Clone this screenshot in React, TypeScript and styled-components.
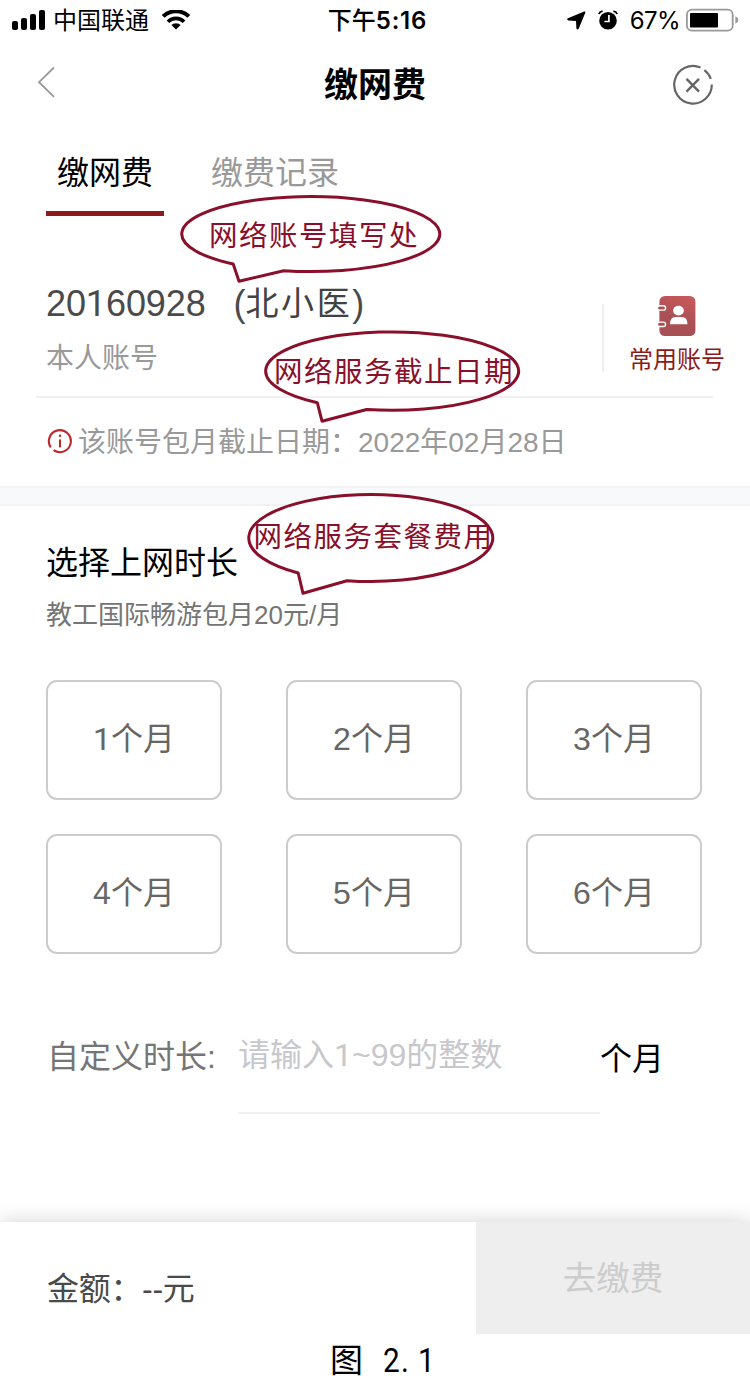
import React from 'react';
import styled, { createGlobalStyle } from 'styled-components';

const GlobalStyle = createGlobalStyle`
  * { box-sizing: border-box; }
  body {
    margin: 0;
    background: #fff;
    font-family: "Liberation Sans", "Noto Sans CJK SC", sans-serif;
    font-weight: 400;
  }
  svg { flex: none; }
`;

const Screen = styled.div`
  position: relative;
  width: 750px;
  height: 1386px;
  overflow: hidden;
  background: #fff;
  display: flex;
  flex-direction: column;
`;

/* A "1" without a foot serif */
const PlainOne = styled.span`
  font-family: Roboto, sans-serif;
`;

const StatusBar = styled.header`
  height: 40px;
  flex: none;
  display: grid;
  grid-template-columns: 1fr auto 1fr;
  grid-template-rows: 40px;
  align-items: center;
  padding: 0 11px 0 12px;
  color: #000;
  font-family: Inter, "Noto Sans CJK SC", sans-serif;
  font-size: 24px;
  line-height: 38px;
`;

const StatusGroup = styled.div<{ $end?: boolean }>`
  display: flex;
  align-items: center;
  height: 40px;
  justify-content: ${(p) => (p.$end ? 'flex-end' : 'flex-start')};
`;

const Carrier = styled.span`
  margin: 0 13px 0 8px;
  padding-top: 2px;
`;

const Clock = styled.span`
  display: flex;
  font-weight: 500;
  padding: 2px 0 0 4px;
`;

const ClockDigits = styled.span`
  font-weight: 600;
  letter-spacing: 0.8px;
`;

const Percent = styled.span`
  margin: 0 6px 0 12px;
  padding-top: 2px;
  letter-spacing: -0.6px;
`;

const NavBar = styled.nav`
  height: 90px;
  flex: none;
  display: grid;
  grid-template-columns: 1fr auto 1fr;
  align-items: center;
  padding: 0 36px 0 36px;
`;

const Title = styled.h1`
  margin: 0;
  font-size: 34px;
  font-weight: 700;
  line-height: 90px;
  color: #000;
`;

const IconButton = styled.button<{ $end?: boolean }>`
  border: 0;
  padding: 0;
  background: none;
  display: flex;
  justify-self: ${(p) => (p.$end ? 'end' : 'start')};
  margin-top: ${(p) => (p.$end ? '0' : '-7px')};
`;

const Tabs = styled.div`
  height: 86px;
  flex: none;
  display: flex;
  gap: 36px;
  padding-left: 46px;
`;

const Tab = styled.div<{ $active?: boolean }>`
  height: 86px;
  padding: 0 11px;
  font-size: 32px;
  line-height: 86px;
  white-space: nowrap;
  color: ${(p) => (p.$active ? '#000' : '#999')};
  border-bottom: 5px solid ${(p) => (p.$active ? '#8b1a1a' : 'transparent')};
`;

const Account = styled.section`
  height: 182px;
  flex: none;
  margin: 0 37px 0 36px;
  padding: 63px 0 0 10px;
  display: flex;
  border-bottom: 2px solid #f0f0f0;
`;

const AccountInfo = styled.div`
  width: 556px;
  flex: none;
`;

const AccountId = styled.div`
  display: flex;
  height: 50px;
  line-height: 50px;
  font-size: 36px;
  letter-spacing: -0.1px;
  color: #4a4a4a;
`;

const OwnerName = styled.span`
  margin-left: 28px;
  display: flex;
`;

const OwnerChars = styled.span`
  font-size: 33px;
  letter-spacing: 2.6px;
  color: #404244;
`;

const AccountKind = styled.div`
  margin-top: 8px;
  font-size: 28px;
  line-height: 43px;
  color: #999;
`;

const Frequent = styled.div`
  height: 68px;
  margin-top: 25px;
  padding-left: 25px;
  border-left: 2px solid #efefef;
  display: flex;
  flex: none;
`;

const FrequentLink = styled.div`
  width: 96px;
  height: 84px;
  margin-top: -9px;
  display: flex;
  flex-direction: column;
  align-items: center;
  font-size: 24px;
  line-height: 30px;
  gap: 9px;
  white-space: nowrap;
  color: #8b1a1a;
`;

const Notice = styled.div`
  height: 88px;
  flex: none;
  padding-left: 47px;
  display: flex;
  align-items: center;
  gap: 5px;
  font-size: 28px;
  line-height: 88px;
  color: #999;
`;

const NoticeText = styled.span`
  padding-top: 1px;
`;

const Band = styled.div`
  height: 20px;
  flex: none;
  background: #f7f9fb;
  border: solid #eff1f3;
  border-width: 2px 0;
`;

const Plan = styled.section`
  height: 174px;
  flex: none;
  padding: 32px 46px 0;
`;

const PlanTitle = styled.h2`
  margin: 0;
  font-size: 32px;
  font-weight: 400;
  line-height: 50px;
  color: #000;
`;

const PlanDetail = styled.p`
  margin: 7px 0 0;
  font-size: 26px;
  line-height: 40px;
  color: #757575;
`;

const MonthGrid = styled.div`
  flex: none;
  display: grid;
  grid-template-columns: repeat(3, 176px);
  grid-auto-rows: 120px;
  gap: 34px 64px;
  padding-left: 46px;
`;

const Month = styled.button`
  padding: 0 0 2px 0;
  border: 2px solid #ccc;
  border-radius: 11px;
  background: #fff;
  font: inherit;
  font-size: 32px;
  line-height: 114px;
  color: #666;
`;

const Custom = styled.div`
  height: 268px;
  flex: none;
  padding: 54px 0 0 47px;
  display: flex;
  font-size: 32px;
  line-height: 98px;
`;

const CustomLabel = styled.label`
  width: 191px;
  color: #757575;
`;

const MonthsField = styled.div`
  width: 362px;
  height: 106px;
  line-height: 94px;
  color: #c7c7cc;
  border-bottom: 2px solid #f0f0f0;
`;

const Unit = styled.span`
  line-height: 102px;
  color: #000;
`;

const PayBar = styled.footer`
  height: 112px;
  flex: none;
  display: flex;
  background: #fff;
  box-shadow: 0 0 20px rgba(0, 0, 0, 0.18);
  clip-path: inset(-30px 0 0 0);
`;

const Amount = styled.div`
  width: 476px;
  padding: 12px 0 0 47px;
  font-size: 32px;
  line-height: 110px;
  letter-spacing: -0.3px;
  color: #4a4a4a;
`;

const PayButton = styled.button`
  flex: 1;
  border: 0;
  padding: 2px 0 0;
  background: #eee;
  font: inherit;
  font-size: 33.5px;
  line-height: 110px;
  color: #ccc;
`;

const Caption = styled.div`
  display: flex;
  padding-left: 330px;
  font-size: 33px;
  line-height: 54px;
  color: #000;
`;

const CaptionNumber = styled.span`
  display: flex;
  margin-left: 20px;
  font-family: Roboto, sans-serif;
  font-size: 33px;
`;

const CaptionGlyph = styled.span`
  width: 17.5px;
  line-height: 54px;
  transform: scaleX(0.9);
  transform-origin: left;
`;

const CalloutBox = styled.div<{ $x: number; $y: number }>`
  position: absolute;
  left: ${(p) => p.$x}px;
  top: ${(p) => p.$y}px;
`;

const CalloutText = styled.span<{ $x: number; $y: number }>`
  position: absolute;
  left: ${(p) => p.$x}px;
  top: ${(p) => p.$y}px;
  font-size: 28.5px;
  letter-spacing: 1.5px;
  line-height: 40px;
  white-space: nowrap;
  color: #8a0f2a;
`;

type CalloutProps = {
  x: number;
  y: number;
  w: number;
  h: number;
  d: string;
  tx: number;
  ty: number;
  text: string;
  filled?: boolean;
};

const Callout = ({ x, y, w, h, d, tx, ty, text, filled }: CalloutProps) => (
  <CalloutBox $x={x} $y={y}>
    <svg width={w} height={h} viewBox={`${x} ${y} ${w} ${h}`} display="block">
      <path d={d} fill={filled ? '#fff' : 'none'} stroke="#8a0f2a" strokeWidth="3" strokeLinejoin="round" />
    </svg>
    <CalloutText $x={tx - x} $y={ty - y}>{text}</CalloutText>
  </CalloutBox>
);

const callouts: CalloutProps[] = [
  {
    x: 176, y: 190, w: 270, h: 96, tx: 209, ty: 216, text: '网络账号填写处',
    d: 'M233.2 264 L239 281.3 L283.7 270.7 A129 37.5 0 1 0 233.2 264 Z',
  },
  {
    x: 260, y: 326, w: 266, h: 100, tx: 274, ty: 352, text: '网络服务截止日期',
    d: 'M317.3 402.7 L322 421.2 L366.7 409.5 A126.5 39.2 0 1 0 317.3 402.7 Z',
  },
  {
    x: 244, y: 490, w: 256, h: 108, tx: 253.5, ty: 516.5, text: '网络服务套餐费用', filled: true,
    d: 'M298.2 573 L303 593.3 L347 580.7 A122 43.5 0 1 0 298.2 573 Z',
  },
];

const SignalIcon = () => (
  <svg width="33" height="22" viewBox="0 0 33 22">
    <rect x="0" y="12" width="6" height="9" rx="2" />
    <rect x="9" y="9" width="6" height="12" rx="2" />
    <rect x="18" y="5" width="6" height="16" rx="2" />
    <rect x="27" y="1" width="6" height="20" rx="2" />
  </svg>
);

const WifiIcon = () => (
  <svg width="28" height="20" viewBox="0 0 28 20">
    <path d="M1.2 6.4 A18.5 18.5 0 0 1 26.8 6.4" fill="none" stroke="#000" strokeWidth="4" />
    <path d="M5.9 11.7 A11.5 11.5 0 0 1 22.1 11.7" fill="none" stroke="#000" strokeWidth="3.7" />
    <path d="M14 19.6 L9.4 15.1 A6.4 6.4 0 0 1 18.6 15.1 Z" />
  </svg>
);

const LocationIcon = () => (
  <svg width="19" height="19" viewBox="0 0 19 19">
    <path d="M17.2 0.5 Q18.8 0.1 18.3 1.8 L11.8 17.4 Q10.2 19.6 9.4 17.2 L9 9.9 L1.2 9.5 Q-0.8 8.4 1 7.3 Z" />
  </svg>
);

const AlarmIcon = () => (
  <svg width="20" height="20" viewBox="0 0 20 20">
    <circle cx="10" cy="10.8" r="8.8" />
    <path d="M0.9 4 Q1.6 1.8 4.6 1.1 M19.1 4 Q18.4 1.8 15.4 1.1" fill="none" stroke="#000" strokeWidth="1.8" />
    <path d="M10.9 5 V11.5 H6.4" fill="none" stroke="#fff" strokeWidth="1.7" />
  </svg>
);

const StatusIcons = styled.div`
  display: flex;
  gap: 12px;
  align-items: center;
`;

const BatteryIcon = () => (
  <svg width="53" height="24" viewBox="0 0 53 24">
    <rect x="0.9" y="1.7" width="45.8" height="21" rx="5" fill="#fff" stroke="#999" strokeWidth="1.8" />
    <rect x="4" y="5" width="28" height="14.5" rx="1" />
    <path d="M49.4 8.3 Q52.4 9.5 52.4 12 Q52.4 14.5 49.4 15.8 Z" fill="#999" />
  </svg>
);

const BackIcon = () => (
  <svg width="22" height="34" viewBox="0 0 22 34">
    <path d="M18 2.5 L3 17.2 L18 31.8" fill="none" stroke="#999" strokeWidth="1.8" />
  </svg>
);

const CloseIcon = () => (
  <svg width="42" height="42" viewBox="0 0 42 42">
    <g fill="none" stroke="#666" strokeWidth="2.2">
      <path d="M28.5 3.5 A18.8 18.8 0 1 0 39.8 20.5" />
      <path d="M32.4 6.1 A18.8 18.8 0 0 1 38.8 14.8" />
      <path d="M14.5 14.8 L27 27.6 M27 14.8 L14.5 27.6" strokeWidth="2.4" />
    </g>
  </svg>
);

const ContactsIcon = () => (
  <svg width="38" height="41" viewBox="0 0 38 41">
    <defs>
      <linearGradient id="book" x1="0.8" y1="0" x2="0.45" y2="1">
        <stop offset="0" stopColor="#c9585c" />
        <stop offset="0.65" stopColor="#a85054" />
        <stop offset="1" stopColor="#a85054" />
      </linearGradient>
    </defs>
    <rect x="1.4" y="1" width="36" height="40" rx="5.5" fill="url(#book)" />
    <g fill="#a85054" stroke="#fff" strokeWidth="1.4">
      <rect x="-0.6" y="10.7" width="8.2" height="4.4" rx="2.2" />
      <rect x="-0.6" y="27.1" width="8.2" height="4.4" rx="2.2" />
    </g>
    <ellipse cx="20.5" cy="15.6" rx="5.4" ry="4.9" fill="#fff" />
    <path d="M11.9 29.3 Q12.1 22 17.5 22 H23.9 Q29.3 22 29.5 29.3 Z" fill="#fff" />
  </svg>
);

const InfoIcon = () => (
  <svg width="26" height="26" viewBox="0 0 26 26">
    <path d="M3.8 18.4 A11 11 0 1 1 6.6 21.2" fill="none" stroke="#c0272d" strokeWidth="2.1" />
    <circle cx="13" cy="6.8" r="1.2" fill="#c0272d" />
    <path d="M13 10.4 V18.4" stroke="#c0272d" strokeWidth="2.1" />
  </svg>
);

export default function App() {
  return (
    <>
      <GlobalStyle />
      <Screen>
        <StatusBar>
          <StatusGroup>
            <SignalIcon />
            <Carrier>中国联通</Carrier>
            <WifiIcon />
          </StatusGroup>
          <Clock>下午<ClockDigits>5:16</ClockDigits></Clock>
          <StatusGroup $end>
            <StatusIcons>
              <LocationIcon />
              <AlarmIcon />
            </StatusIcons>
            <Percent>67%</Percent>
            <BatteryIcon />
          </StatusGroup>
        </StatusBar>
        <NavBar>
          <IconButton><BackIcon /></IconButton>
          <Title>缴网费</Title>
          <IconButton $end><CloseIcon /></IconButton>
        </NavBar>
        <Tabs>
          <Tab $active>缴网费</Tab>
          <Tab>缴费记录</Tab>
        </Tabs>
        <Account>
          <AccountInfo>
            <AccountId>
              <span>20<PlainOne>1</PlainOne>60928</span>
              <OwnerName>(<OwnerChars>北小医</OwnerChars>)</OwnerName>
            </AccountId>
            <AccountKind>本人账号</AccountKind>
          </AccountInfo>
          <Frequent>
            <FrequentLink>
              <ContactsIcon />
              <span>常用账号</span>
            </FrequentLink>
          </Frequent>
        </Account>
        <Notice>
          <InfoIcon />
          <NoticeText>该账号包月截止日期：2022年02月28日</NoticeText>
        </Notice>
        <Band />
        <Plan>
          <PlanTitle>选择上网时长</PlanTitle>
          <PlanDetail>教工国际畅游包月20元/月</PlanDetail>
        </Plan>
        <MonthGrid>
          {[1, 2, 3, 4, 5, 6].map((n) => (
            <Month key={n}>{n === 1 ? <PlainOne>1</PlainOne> : n}个月</Month>
          ))}
        </MonthGrid>
        <Custom>
          <CustomLabel>自定义时长:</CustomLabel>
          <MonthsField>请输入<PlainOne>1</PlainOne>~99的整数</MonthsField>
          <Unit>个月</Unit>
        </Custom>
        <PayBar>
          <Amount>金额：--元</Amount>
          <PayButton>去缴费</PayButton>
        </PayBar>
        <Caption>
          图
          <CaptionNumber>
            {['2', '.', '1'].map((c) => (
              <CaptionGlyph key={c}>{c}</CaptionGlyph>
            ))}
          </CaptionNumber>
        </Caption>
        {callouts.map((c) => (
          <Callout key={c.text} {...c} />
        ))}
      </Screen>
    </>
  );
}
